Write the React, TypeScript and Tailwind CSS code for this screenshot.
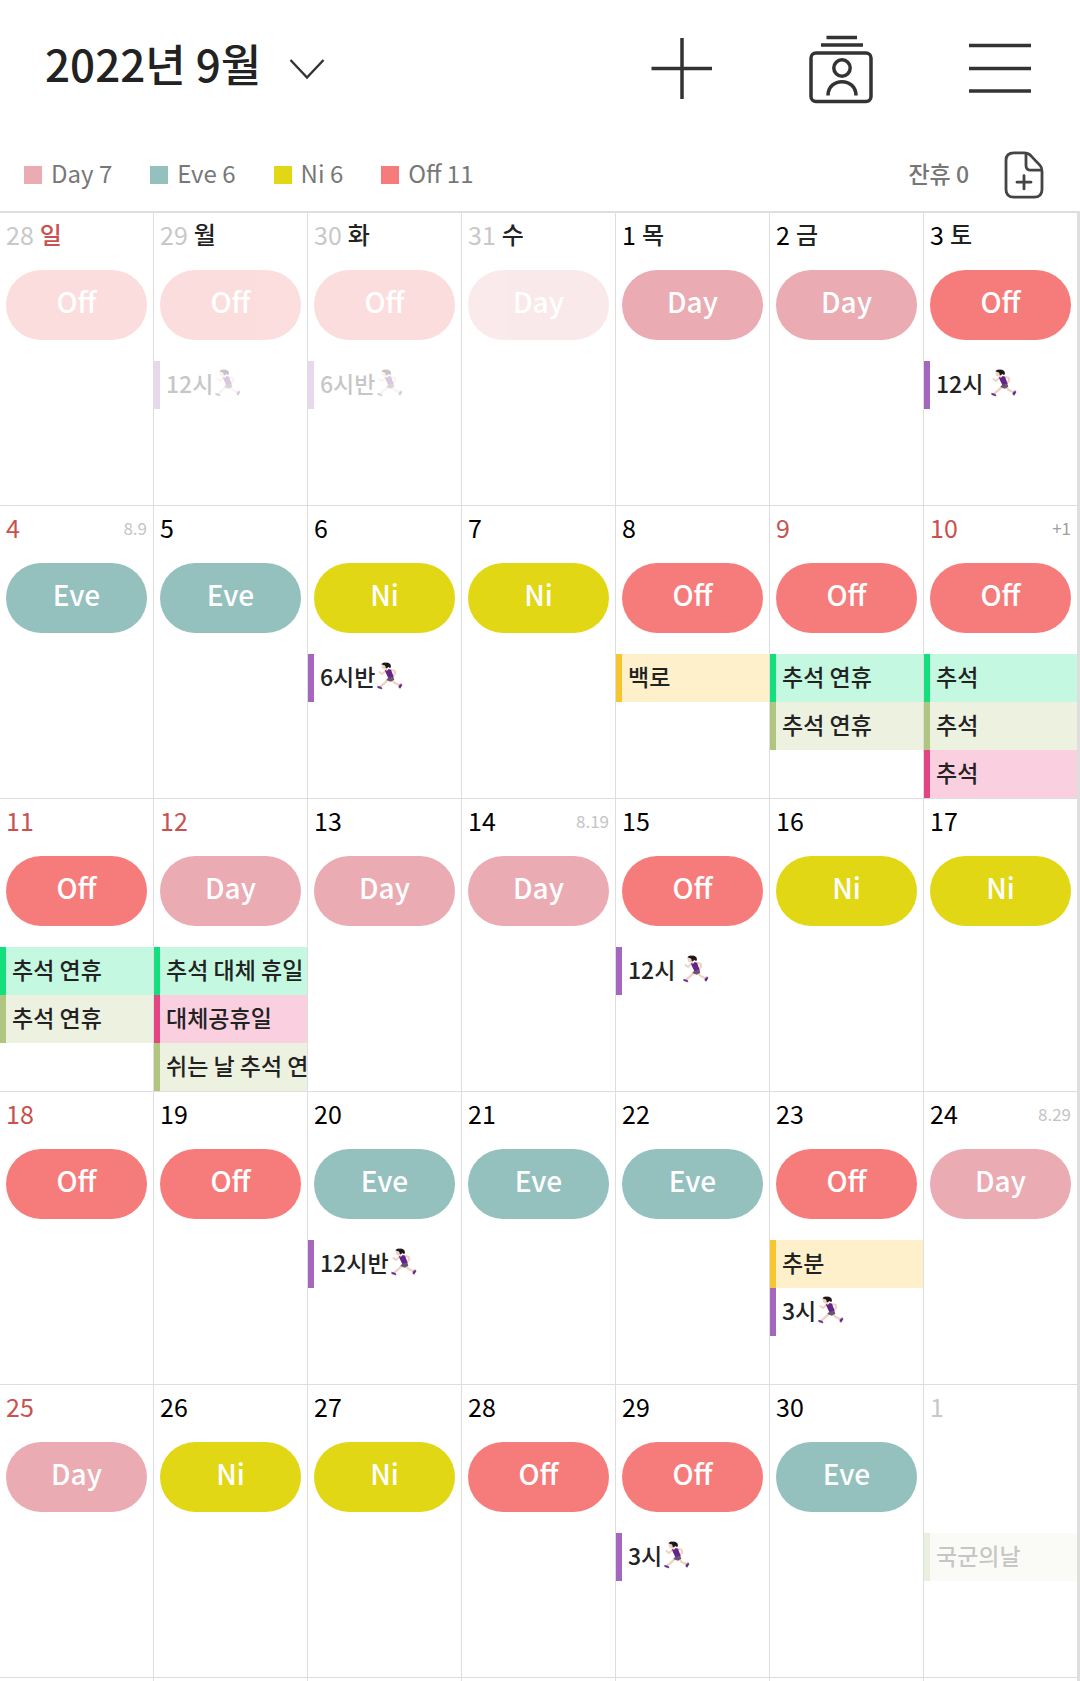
import React from "react";

type Shift = "Day" | "Eve" | "Ni" | "Off";
type Tone = "purple" | "yellow" | "green" | "olive" | "pink";

interface CalendarEvent {
  text: string;
  tone: Tone;
  runner?: boolean;
}

interface Day {
  date: number;
  weekday?: string;
  shift?: Shift;
  holiday?: boolean;
  outside?: boolean;
  lunar?: string;
  more?: string;
  events?: CalendarEvent[];
}

const shiftColor: Record<Shift, string> = {
  Day: "bg-[#eaabb3]",
  Eve: "bg-[#94c0be]",
  Ni: "bg-[#e2d715]",
  Off: "bg-[#f67c7b]",
};

const toneColor: Record<Tone, string> = {
  purple: "border-[#a566bf]",
  yellow: "border-[#f7c52e] bg-[#fdf0cb]",
  green: "border-[#14df7d] bg-[#c5f8e1]",
  olive: "border-[#afc580] bg-[#edf1e0]",
  pink: "border-[#e54483] bg-[#fad0e1]",
};

const run = (text: string): CalendarEvent => ({ text, tone: "purple", runner: true });

const weeks: Day[][] = [
  [
    { date: 28, weekday: "일", shift: "Off", outside: true },
    { date: 29, weekday: "월", shift: "Off", outside: true, events: [run("12시")] },
    { date: 30, weekday: "화", shift: "Off", outside: true, events: [run("6시반")] },
    { date: 31, weekday: "수", shift: "Day", outside: true },
    { date: 1, weekday: "목", shift: "Day" },
    { date: 2, weekday: "금", shift: "Day" },
    { date: 3, weekday: "토", shift: "Off", events: [run("12시 ")] },
  ],
  [
    { date: 4, shift: "Eve", holiday: true, lunar: "8.9" },
    { date: 5, shift: "Eve" },
    { date: 6, shift: "Ni", events: [run("6시반")] },
    { date: 7, shift: "Ni" },
    { date: 8, shift: "Off", events: [{ text: "백로", tone: "yellow" }] },
    {
      date: 9,
      shift: "Off",
      holiday: true,
      events: [
        { text: "추석 연휴", tone: "green" },
        { text: "추석 연휴", tone: "olive" },
      ],
    },
    {
      date: 10,
      shift: "Off",
      holiday: true,
      more: "+1",
      events: [
        { text: "추석", tone: "green" },
        { text: "추석", tone: "olive" },
        { text: "추석", tone: "pink" },
      ],
    },
  ],
  [
    {
      date: 11,
      shift: "Off",
      holiday: true,
      events: [
        { text: "추석 연휴", tone: "green" },
        { text: "추석 연휴", tone: "olive" },
      ],
    },
    {
      date: 12,
      shift: "Day",
      holiday: true,
      events: [
        { text: "추석 대체 휴일", tone: "green" },
        { text: "대체공휴일", tone: "pink" },
        { text: "쉬는 날 추석 연", tone: "olive" },
      ],
    },
    { date: 13, shift: "Day" },
    { date: 14, shift: "Day", lunar: "8.19" },
    { date: 15, shift: "Off", events: [run("12시 ")] },
    { date: 16, shift: "Ni" },
    { date: 17, shift: "Ni" },
  ],
  [
    { date: 18, shift: "Off", holiday: true },
    { date: 19, shift: "Off" },
    { date: 20, shift: "Eve", events: [run("12시반")] },
    { date: 21, shift: "Eve" },
    { date: 22, shift: "Eve" },
    { date: 23, shift: "Off", events: [{ text: "추분", tone: "yellow" }, run("3시")] },
    { date: 24, shift: "Day", lunar: "8.29" },
  ],
  [
    { date: 25, shift: "Day", holiday: true },
    { date: 26, shift: "Ni" },
    { date: 27, shift: "Ni" },
    { date: 28, shift: "Off" },
    { date: 29, shift: "Off", events: [run("3시")] },
    { date: 30, shift: "Eve" },
    { date: 1, outside: true, events: [{ text: "국군의날", tone: "olive" }] },
  ],
];

const legend: { shift: Shift; count: number }[] = [
  { shift: "Day", count: 7 },
  { shift: "Eve", count: 6 },
  { shift: "Ni", count: 6 },
  { shift: "Off", count: 11 },
];

function Runner() {
  return (
    <svg viewBox="36 28 78 84" className="ml-0.5 h-7 w-[26px] shrink-0" fill="none" strokeLinecap="round" strokeLinejoin="round" role="img" aria-label="달리기">
      <path d="M76 52 L89 54 L91 63 L85 69" stroke="#efd3bf" strokeWidth="6" />
      <path d="M78 79 L89 91 L102 97" stroke="#efd3bf" strokeWidth="7" />
      <path d="M70 80 L60 90 L47 101" stroke="#efd3bf" strokeWidth="7" />
      <path d="M63 54 L51 64 L43 58" stroke="#efd3bf" strokeWidth="5.5" />
      <path d="M50 36 Q48 47 56 50 L65 53 L69 38 Z" fill="#efd3bf" />
      <path d="M49 35 Q54 28 63 30 Q71 29 76 35 Q80 41 76 46 Q71 45 69 42 Q68 48 62 46 Q63 38 55 37 Z" fill="#1d1719" />
      <path d="M59 52 L66 54 L71 49 L78 51 L86 72 L71 78 L64 64 Z" fill="#652489" />
      <path d="M69 76 L85 72 L88 81 L77 87 L64 82 Z" fill="#6c5376" />
      <path d="M39 101 L49 104 L51 109 L39 105 Z" fill="#6c2b92" stroke="#6c2b92" strokeWidth="2" />
      <path d="M109 94 L111 97 L105 107 L102 104 L102 100 Z" fill="#5d2280" stroke="#5d2280" strokeWidth="2" />
    </svg>
  );
}

function DayCell({ day }: { day: Day }) {
  const dateColor = day.outside ? "text-[#c8c8c8]" : day.holiday ? "text-[#c85250]" : "text-black";
  const fade = day.outside ? "opacity-25" : "";
  return (
    <td className="h-[293px] overflow-hidden border-r border-b border-[#dedede] p-0 align-top">
      <div className="flex h-11 items-center px-1.5 text-[25px]">
        <span className={dateColor}>{day.date}</span>
        {day.weekday && (
          <span className={`ml-1.5 pb-0.5 text-[24px] font-medium ${day.weekday === "일" ? "text-[#c85250]" : "text-[#222]"}`}>{day.weekday}</span>
        )}
        {day.lunar && <span className="ml-auto text-[17px] text-[#c4c4c4]">{day.lunar}</span>}
        {day.more && <span className="ml-auto text-[17px] text-[#a0a0a0]">{day.more}</span>}
      </div>
      <div className="mx-1.5 mt-[13px] h-[70px]">
        {day.shift && (
          <div className={`flex h-full items-center justify-center rounded-full pb-2 text-[28px] font-medium text-white ${shiftColor[day.shift]} ${fade}`}>
            {day.shift}
          </div>
        )}
      </div>
      <ul className="mt-[21px]">
        {day.events?.map((event, i) => (
          <li
            key={i}
            className={`flex h-12 items-center overflow-hidden border-l-6 pb-1 pl-[6px] text-[23px] font-medium whitespace-pre text-[#222] ${toneColor[event.tone]} ${fade}`}
          >
            <span>{event.text}</span>
            {event.runner && <Runner />}
          </li>
        ))}
      </ul>
    </td>
  );
}

export default function App() {
  return (
    <div className="flex min-h-screen w-full flex-col bg-white font-['Noto_Sans_CJK_KR','Noto_Sans',sans-serif] text-[#222]">
      <header className="flex h-[137px] items-center justify-between pr-12 pl-[45px]">
        <h1>
          <button type="button" className="flex items-center gap-7 text-[44px] leading-none font-medium">
            <span className="pb-3">2022년 9월</span>
            <svg viewBox="0 0 36 22" className="h-[22px] w-9" fill="none" stroke="#333" strokeWidth="2.4" aria-hidden="true">
              <path d="M1.5 2 L18 19.500 L34.500 2" />
            </svg>
          </button>
        </h1>
        <div className="flex items-center gap-[95px]">
          <button type="button" aria-label="추가">
            <svg viewBox="0 0 64 70" className="h-[70px] w-16" stroke="#333" strokeWidth="3.500" aria-hidden="true">
              <path d="M1.500 34.500 H62 M32 4 V65" />
            </svg>
          </button>
          <button type="button" aria-label="프로필">
            <svg viewBox="0 0 64 70" className="h-[70px] w-16" fill="none" stroke="#333" strokeWidth="3.500" aria-hidden="true">
              <path d="M17.500 3.500 H48 M12 11 H54" />
              <rect x="2" y="19" width="60" height="48.500" rx="5" />
              <circle cx="33" cy="34" r="8.200" />
              <path d="M19 61.500 C19 43 47 43 47 61.500" />
            </svg>
          </button>
          <button type="button" aria-label="메뉴">
            <svg viewBox="0 0 64 70" className="h-[70px] w-16" stroke="#333" strokeWidth="3.500" aria-hidden="true">
              <path d="M1 11.500 H63 M1 34.500 H63 M1 57 H63" />
            </svg>
          </button>
        </div>
      </header>

      <div className="flex h-[74px] items-center justify-between pt-0.5 pr-9 pl-6 text-[24px] text-[#777]">
        <ul className="flex gap-[38px]">
          {legend.map(({ shift, count }) => (
            <li key={shift} className="flex items-center gap-[9px]">
              <span className={`size-[18px] ${shiftColor[shift]}`} />
              <span className="pb-1">
                {shift} {count}
              </span>
            </li>
          ))}
        </ul>
        <div className="flex items-center gap-[35px]">
          <span className="pb-1 text-[23px] font-medium">잔휴 0</span>
          <button type="button" aria-label="휴가 추가">
            <svg viewBox="0 0 40 50" className="h-12 w-10" fill="none" stroke="#444" strokeWidth="2.800" strokeLinecap="round" strokeLinejoin="round" preserveAspectRatio="none" aria-hidden="true">
              <path d="M10 2 H20 Q24 2 27 5 L36 15 Q38 17 38 21 V40 Q38 48 30 48 H10 Q2 48 2 40 V10 Q2 2 10 2 Z" />
              <path d="M22 2.500 V15 Q22 20 27 20 H37.500" />
              <path d="M13 32.500 H27 M20 25.500 V39.500" />
            </svg>
          </button>
        </div>
      </div>

      <main className="flex grow flex-col border-t-2 border-r-2 border-[#dedede]">
        <table className="w-full table-fixed border-separate border-spacing-0">
          <tbody>
            {weeks.map((week, w) => (
              <tr key={w}>
                {week.map((day, d) => (
                  <DayCell key={d} day={day} />
                ))}
              </tr>
            ))}
          </tbody>
        </table>
        <div className="grid grow grid-cols-7" aria-hidden="true">
          {weeks[0].map((_, i) => (
            <div key={i} className="border-r border-[#dedede]" />
          ))}
        </div>
      </main>
    </div>
  );
}
